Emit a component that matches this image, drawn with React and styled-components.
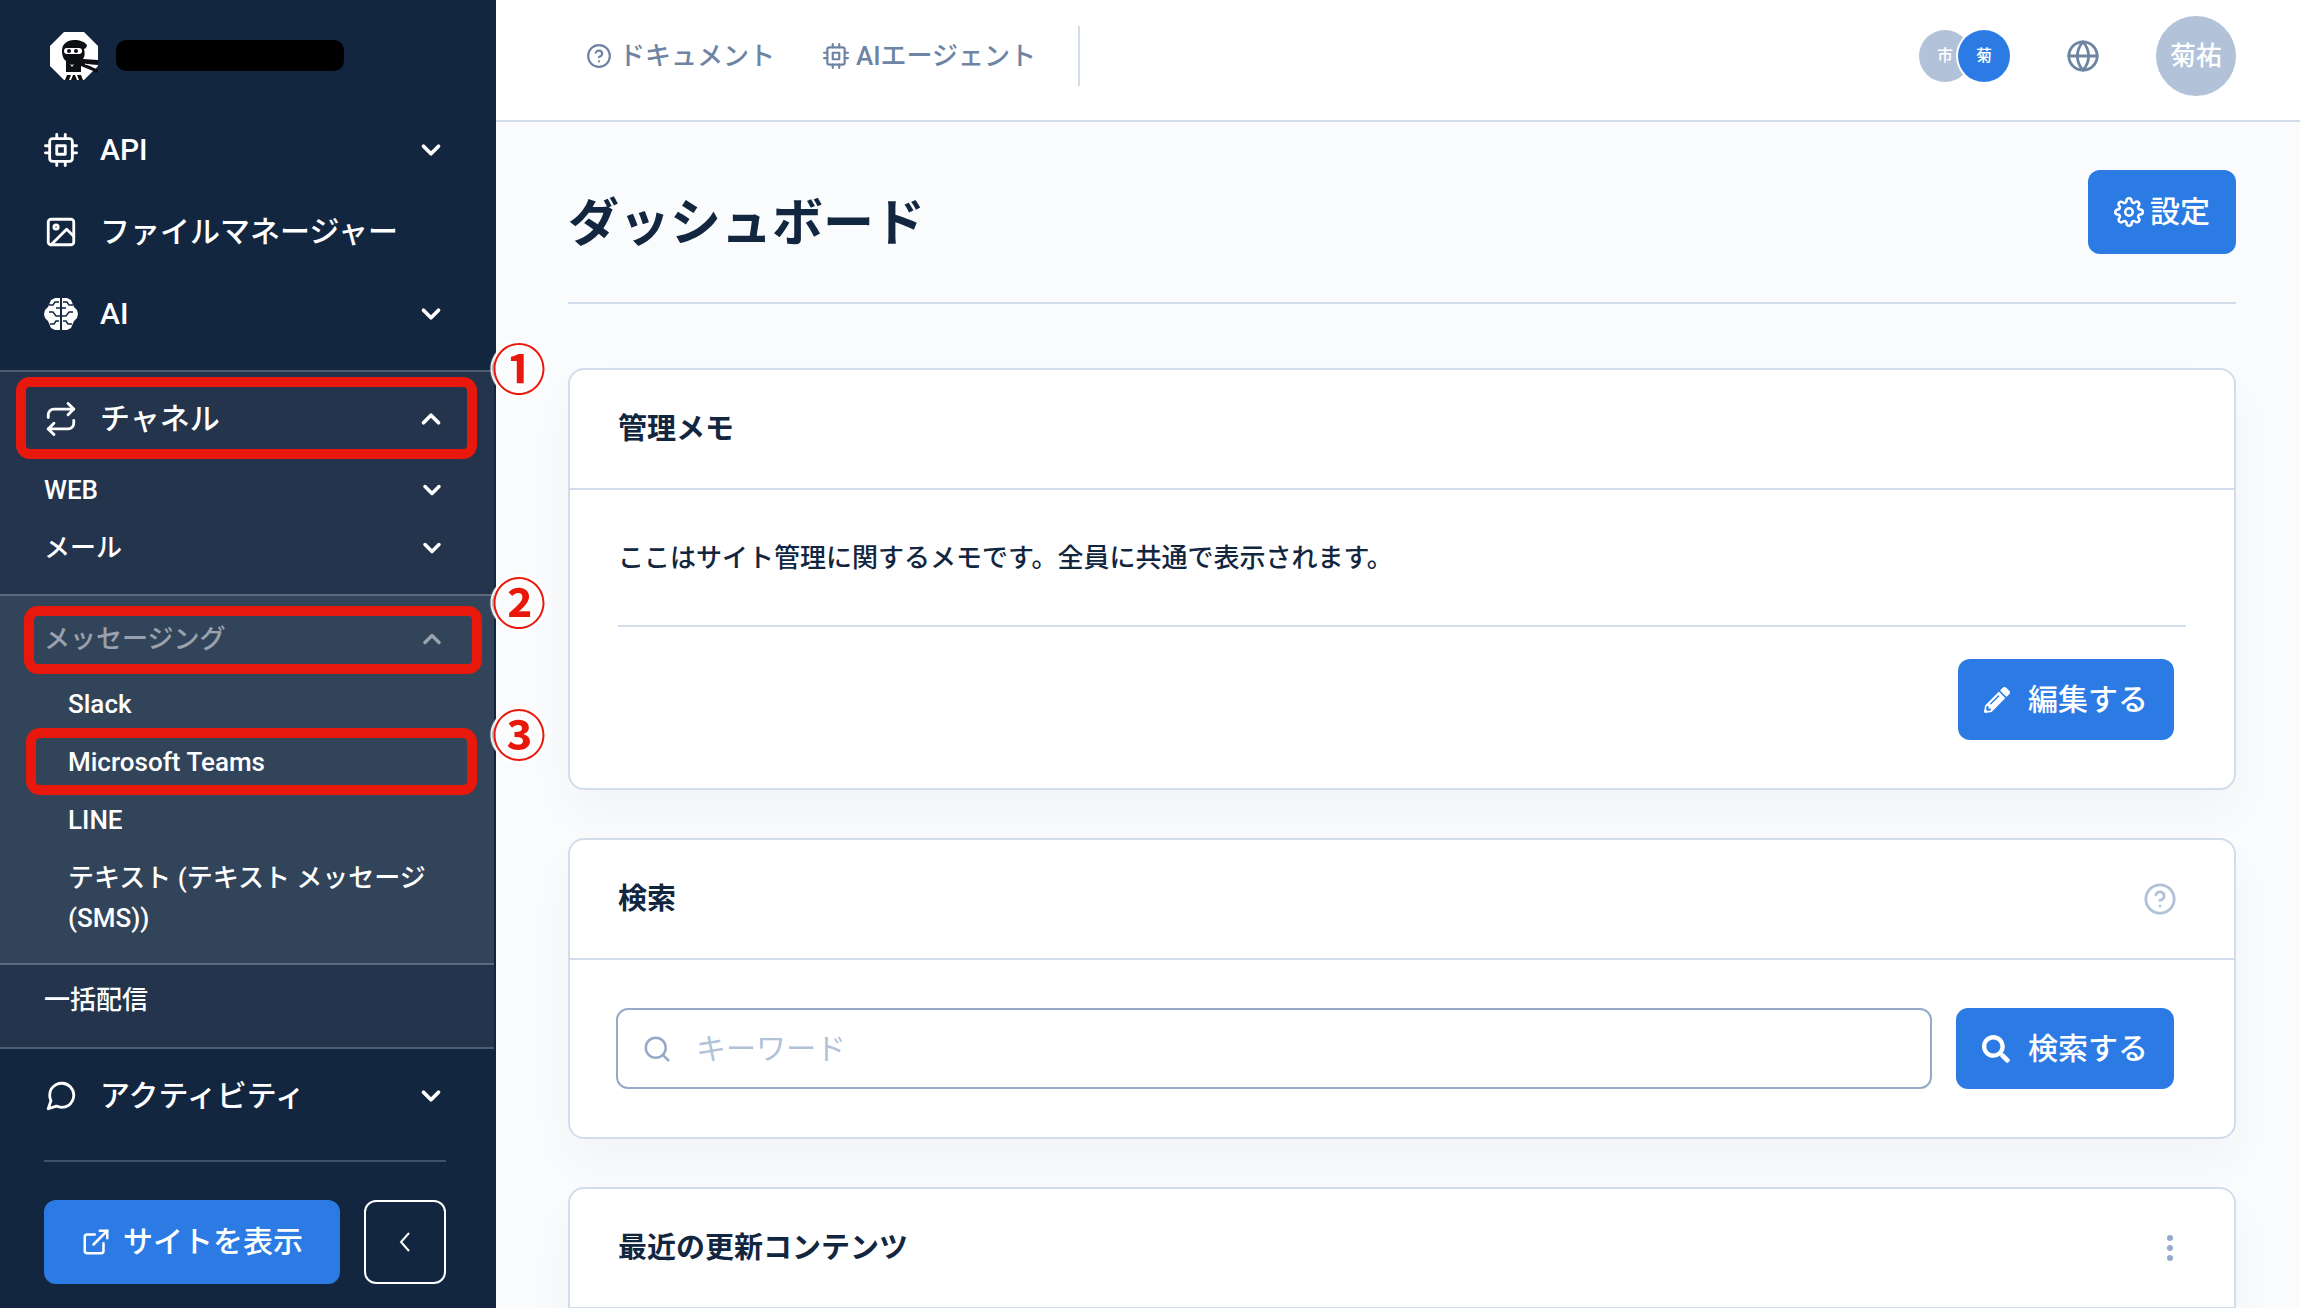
import React, { useState } from 'react';
import styled, { createGlobalStyle, css } from 'styled-components';
import {
  FiCpu,
  FiImage,
  FiRepeat,
  FiMessageCircle,
  FiExternalLink,
  FiHelpCircle,
  FiGlobe,
  FiSettings,
  FiSearch,
  FiChevronDown,
  FiChevronUp,
} from 'react-icons/fi';
import { FaPencilAlt, FaSearch } from 'react-icons/fa';

const GlobalStyle = createGlobalStyle`
  * {
    box-sizing: border-box;
  }

  body {
    margin: 0;
    background: #f9fbfd;
    color: #12263f;
    font-family: Roboto, "Noto Sans CJK JP", sans-serif;
    font-size: 26px;
    font-weight: 500;
    line-height: 40px;
  }

  button, input {
    font: inherit;
  }

  svg {
    display: block;
    flex: none;
  }
`;

const Layout = styled.div`
  display: flex;
  height: 100vh;
  overflow: hidden;
`;

const Sidebar = styled.nav`
  display: flex;
  flex-direction: column;
  flex: none;
  width: 496px;
  background: #12263f;
  border-right: 2px solid #12263f;
  color: #fff;
`;

const Brand = styled.a`
  display: flex;
  align-items: center;
  gap: 18px;
  height: 109px;
  padding: 2px 50px 0;
`;

const BrandName = styled.span`
  width: 228px;
  height: 31px;
  border-radius: 10px;
  background: #000;
`;

const NavItem = styled.button`
  display: flex;
  align-items: center;
  gap: 22px;
  width: 100%;
  height: ${props => props.$height || 82}px;
  padding: 0 48px 0 44px;
  border: none;
  background: none;
  color: inherit;
  font-size: 30px;
  text-align: left;
  cursor: pointer;

  > svg:last-child {
    margin-left: auto;
  }
`;

const SubMenu = styled.div`
  margin-top: 15px;
  padding: 5px 0 18px;
  border-top: 2px solid #4f5d70;
  border-bottom: 2px solid #4f5d70;
  background: #23344c;
`;

const SubItem = styled(NavItem)`
  height: 58px;
  font-size: 26px;
  opacity: ${props => (props.$current ? 0.5 : 1)};
`;

const Nested = styled.div`
  margin: 17px 0 6px;
  padding: 14px 0 16px;
  border-top: 2px solid #5b697b;
  border-bottom: 2px solid #5b697b;
  background: #32445a;
`;

const NestedList = styled.div`
  padding-top: 7px;
`;

const NestedLink = styled.a`
  display: block;
  padding: 9px 60px 9px 68px;
  color: #fff;
  text-decoration: none;
`;

const Marked = styled.div`
  position: relative;
`;

const frames = {
  channel: css`inset: 0 17px 2px 16px;`,
  messaging: css`inset: -4px 12px -6px 24px;`,
  teams: css`inset: -5px 17px -4px 26px;`,
};

const Frame = styled.span`
  position: absolute;
  ${props => frames[props.$for]}
  border: 10px solid #e8190c;
  border-radius: 14px;
  pointer-events: none;
`;

// numbered marker hanging off the right edge of a framed row
const Step = styled.span`
  position: absolute;
  z-index: 2;
  left: 492px;
  top: ${props => props.$top}px;
  color: #e8190c;
  font-size: 54px;
  font-weight: 700;
  line-height: 54px;
  text-shadow: 0 0 3px #fff, 3px 0 1px #fff, -3px 0 1px #fff, 0 3px 1px #fff, 0 -3px 1px #fff;
  pointer-events: none;
`;

const SidebarFooter = styled.div`
  display: flex;
  gap: 24px;
  margin: auto 48px 24px 44px;
  padding-top: 38px;
  border-top: 2px solid #41516a;
`;

const Button = styled.button`
  display: flex;
  align-items: center;
  justify-content: center;
  gap: ${props => props.$gap || 18}px;
  height: ${props => (props.$tall ? 84 : 81)}px;
  padding: 0 26px;
  border: none;
  border-radius: 12px;
  background: #2c7be5;
  color: #fff;
  font-size: 30px;
  white-space: nowrap;
  cursor: pointer;
`;

const SiteButton = styled(Button)`
  flex: 1;
`;

const CollapseButton = styled(Button)`
  width: 82px;
  border: 2px solid #fff;
  background: transparent;
`;

const Main = styled.div`
  display: flex;
  flex-direction: column;
  flex: 1;
  min-width: 0;
`;

const Topbar = styled.header`
  display: flex;
  align-items: center;
  justify-content: space-between;
  flex: none;
  height: 122px;
  padding: 0 64px 8px 90px;
  border-bottom: 2px solid #d2ddec;
  background: #fff;
`;

const TopLinks = styled.div`
  display: flex;
  align-items: center;
  height: 60px;
  gap: 48px;
  padding-right: 42px;
  border-right: 2px solid #d2ddec;
`;

const TopLink = styled.a`
  display: flex;
  align-items: center;
  gap: 7px;
  color: #6e84a3;
  text-decoration: none;
`;

const TopTools = styled.div`
  display: flex;
  align-items: center;
`;

const Avatar = styled.span`
  display: flex;
  align-items: center;
  justify-content: center;
  width: ${props => props.$size}px;
  height: ${props => props.$size}px;
  border-radius: 50%;
  background: ${props => (props.$primary ? '#2c7be5' : '#b1c2d9')};
  color: #fff;
  font-size: ${props => (props.$size > 60 ? 26 : 16)}px;
`;

const StackedAvatar = styled(Avatar)`
  margin-left: -13px;
  box-shadow: 0 0 0 2px #fff;
`;

const IconButton = styled.button`
  display: flex;
  padding: 0;
  border: none;
  background: none;
  color: ${props => props.$color || '#6e84a3'};
  cursor: pointer;
`;

const LanguageButton = styled(IconButton)`
  margin: 0 56px;
`;

const Content = styled.main`
  padding: 0 64px 0 72px;
`;

const PageHeader = styled.div`
  display: flex;
  align-items: center;
  justify-content: space-between;
  height: 182px;
  margin-bottom: 64px;
  border-bottom: 2px solid #d2ddec;
`;

const PageTitle = styled.h1`
  margin: 24px 0 0;
  font-size: 51px;
  font-weight: 700;
  line-height: 60px;
`;

const Card = styled.section`
  margin-bottom: 48px;
  border: 2px solid #d2ddec;
  border-radius: 16px;
  background: #fff;
  box-shadow: 0 24px 48px rgba(18, 38, 63, 0.03);
`;

const CardHeader = styled.div`
  display: flex;
  align-items: center;
  justify-content: space-between;
  height: 120px;
  padding: 0 57px 0 48px;
  border-bottom: 2px solid #d2ddec;
`;

const CardTitle = styled.h2`
  margin: 0;
  font-size: 29px;
  font-weight: 700;
`;

const CardBody = styled.div`
  padding: 48px;
`;

const MemoText = styled.p`
  margin: 0;
  padding-bottom: 47px;
  border-bottom: 2px solid #d2ddec;
`;

const MemoActions = styled.div`
  display: flex;
  justify-content: flex-end;
  padding: 32px 12px 0 0;
`;

const SearchForm = styled.form`
  display: flex;
  gap: 24px;
  padding: 48px 60px 48px 46px;
`;

const SearchBox = styled.label`
  display: flex;
  align-items: center;
  flex: 1;
  gap: 24px;
  padding: 0 24px;
  border: 2px solid #95aac9;
  border-radius: 12px;
  color: #95aac9;
`;

const SearchInput = styled.input`
  flex: 1;
  min-width: 0;
  padding: 0;
  border: none;
  outline: none;
  background: none;
  color: #12263f;
  font-size: 30px;
  font-weight: 400;

  &::placeholder {
    color: #b1c2d9;
    opacity: 1;
  }
`;

const Logo = () => (
  <svg width="48" height="48" viewBox="0 0 48 48">
    <path d="M14 0h20l14 14v20L34 48H14L0 34V14z" fill="#fff" />
    <g fill="#0d0f12">
      <path d="M12 19C12 12 17 8 24 8c6 0 11 2 13 5l-1 3-2 1c1 4 1 7-1 10l15 1v5l-12-1 12 6v3l-17-7v6H16V29c-3-2-4-6-4-10z" />
      <path d="M17 43h4l-2 5h-4zM23 43h2l2 5h-6zM27 43h4l2 5h-4z" />
    </g>
    <rect x="14" y="16" width="18" height="6" rx="3" fill="#fff" />
    <path d="M20 32l2 1 2-1-2 3z" fill="#fff" />
    <circle cx="19" cy="19" r="2" fill="#0d0f12" />
    <circle cx="26" cy="19" r="2" fill="#0d0f12" />
    <path d="M35 32l12 3" stroke="#fff" />
  </svg>
);

const BrainIcon = () => (
  <svg width="34" height="34" viewBox="0 0 34 34" fill="currentColor">
    <path d="M16 1h-5l-4 2-3 7-3 3-1 4 1 4 3 3 3 7 4 2h5zM18 1h5l4 2 3 7 3 3 1 4-1 4-3 3-3 7-4 2h-5z" />
    <g fill="none" stroke="#12263f" strokeWidth="1.4">
      <path d="M5 8h4l2-3h4M29 8h-4l-2-3h-4" />
      <path d="M12 11h10M5 15h4l3 4h10l3-4h4" />
      <path d="M6 27h4l2-3h3M28 27h-4l-2-3h-3" />
    </g>
  </svg>
);

const DotsIcon = () => (
  <svg width="14" height="26" viewBox="0 0 14 26" fill="#95aac9">
    <circle cx="7" cy="3" r="3" />
    <circle cx="7" cy="13" r="3" />
    <circle cx="7" cy="23" r="3" />
  </svg>
);

const App = () => {
  const [keyword, setKeyword] = useState('');

  return (
    <Layout>
      <GlobalStyle />
      <Sidebar>
        <Brand href="#" aria-label="Home">
          <Logo />
          <BrandName />
        </Brand>
        <NavItem><FiCpu size={34} />API<FiChevronDown size={30} strokeWidth={3} /></NavItem>
        <NavItem><FiImage size={34} /><span>ファイルマネージャー</span></NavItem>
        <NavItem><BrainIcon />AI<FiChevronDown size={30} strokeWidth={3} /></NavItem>
        <SubMenu>
          <Marked>
            <NavItem $height={84}><FiRepeat size={34} />チャネル<FiChevronUp size={30} strokeWidth={3} /></NavItem>
            <Frame $for="channel" />
            <Step $top={-32}>①</Step>
          </Marked>
          <SubItem>WEB<FiChevronDown size={28} strokeWidth={3} /></SubItem>
          <SubItem>メール<FiChevronDown size={28} strokeWidth={3} /></SubItem>
          <Nested>
            <Marked>
              <SubItem $current>メッセージング<FiChevronUp size={28} strokeWidth={3} /></SubItem>
              <Frame $for="messaging" />
              <Step $top={-31}>②</Step>
            </Marked>
            <NestedList>
              <NestedLink href="#">Slack</NestedLink>
              <Marked>
                <NestedLink href="#">Microsoft Teams</NestedLink>
                <Frame $for="teams" />
                <Step $top={-22}>③</Step>
              </Marked>
              <NestedLink href="#">LINE</NestedLink>
              <NestedLink href="#">テキスト (テキスト メッセージ (SMS))</NestedLink>
            </NestedList>
          </Nested>
          <SubItem>一括配信</SubItem>
        </SubMenu>
        <NavItem $height={94}><FiMessageCircle size={34} />アクティビティ<FiChevronDown size={30} strokeWidth={3} /></NavItem>
        <SidebarFooter>
          <SiteButton $tall $gap={12}><FiExternalLink size={30} />サイトを表示</SiteButton>
          <CollapseButton $tall aria-label="Collapse">
            <svg width="12" height="20" viewBox="0 0 12 20" fill="none" stroke="currentColor" strokeWidth="2"><path d="M10 1L2 10l8 9" /></svg>
          </CollapseButton>
        </SidebarFooter>
      </Sidebar>

      <Main>
        <Topbar>
          <TopLinks>
            <TopLink href="#"><FiHelpCircle size={26} />ドキュメント</TopLink>
            <TopLink href="#"><FiCpu size={26} />AIエージェント</TopLink>
          </TopLinks>
          <TopTools>
            <Avatar $size={52}>市</Avatar>
            <StackedAvatar $size={52} $primary>菊</StackedAvatar>
            <LanguageButton aria-label="Language"><FiGlobe size={34} /></LanguageButton>
            <Avatar $size={80}>菊祐</Avatar>
          </TopTools>
        </Topbar>

        <Content>
          <PageHeader>
            <PageTitle>ダッシュボード</PageTitle>
            <Button $tall $gap={6}><FiSettings size={30} />設定</Button>
          </PageHeader>

          <Card>
            <CardHeader>
              <CardTitle>管理メモ</CardTitle>
            </CardHeader>
            <CardBody>
              <MemoText>ここはサイト管理に関するメモです。全員に共通で表示されます。</MemoText>
              <MemoActions>
                <Button><FaPencilAlt size={26} />編集する</Button>
              </MemoActions>
            </CardBody>
          </Card>

          <Card>
            <CardHeader>
              <CardTitle>検索</CardTitle>
              <IconButton $color="#b1c2d9" aria-label="Help"><FiHelpCircle size={34} /></IconButton>
            </CardHeader>
            <SearchForm onSubmit={e => e.preventDefault()}>
              <SearchBox>
                <FiSearch size={30} />
                <SearchInput
                  aria-label="キーワード"
                  placeholder="キーワード"
                  value={keyword}
                  onChange={e => setKeyword(e.target.value)}
                />
              </SearchBox>
              <Button><FaSearch size={28} />検索する</Button>
            </SearchForm>
          </Card>

          <Card>
            <CardHeader>
              <CardTitle>最近の更新コンテンツ</CardTitle>
              <IconButton aria-label="Menu"><DotsIcon /></IconButton>
            </CardHeader>
            <CardBody />
          </Card>
        </Content>
      </Main>
    </Layout>
  );
};

export default App;
